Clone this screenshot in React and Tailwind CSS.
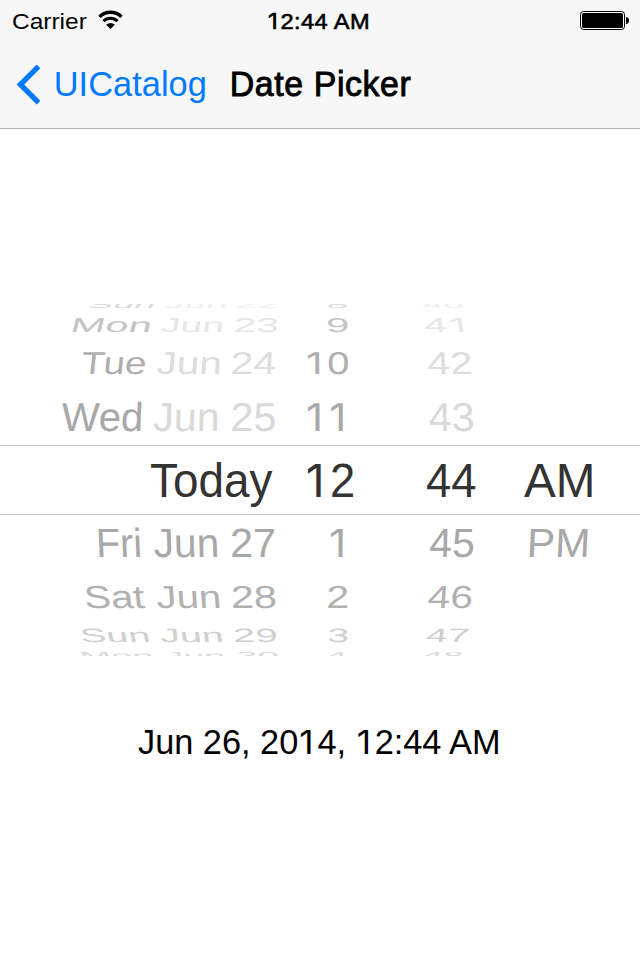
import React from "react";

const EM = 46;
const CAP = 0.688 * EM;
const BASE = EM / 2 + ((0.905 - 0.212) / 2) * EM;
const pen = document.createElement("canvas").getContext("2d");

// The figure one is set in Inter for its footless form, in a full figure-wide box.
const ONE = { size: 43.5, advance: 25.6, left: 3.4, width: 13 };

function measure(ch) {
  if (ch === "1") {
    return { width: ONE.advance, actualBoundingBoxLeft: -ONE.left, actualBoundingBoxRight: ONE.left + ONE.width };
  }
  pen.font = EM + 'px "Liberation Sans"';
  return pen.measureText(ch);
}

const split = (text) => text.split(/(1)/).filter(Boolean);

function inkOf(text, spacing) {
  let advance = 0;
  let left = 0;
  let right = 0;
  split(text).forEach((run, i) => {
    const m = measure(run);
    if (i === 0) left = -m.actualBoundingBoxLeft;
    const extra = run === "1" ? 0 : run.length * spacing;
    right = advance + m.actualBoundingBoxRight + Math.max(0, extra - spacing);
    advance += m.width + extra;
  });
  return { left, right };
}

function One() {
  pen.font = ONE.size + "px Inter";
  const m = pen.measureText("1");
  const inkLeft = -m.actualBoundingBoxLeft;
  const k = ONE.width / (m.actualBoundingBoxRight - inkLeft);
  return (
    <span className="inline-block align-baseline tracking-normal" style={{ width: ONE.advance }}>
      <span
        className="block w-max origin-left font-[Inter] text-[43.5px]"
        style={{ transform: `matrix(${k},0,0,1,${ONE.left - inkLeft * k},0)` }}
      >
        1
      </span>
    </span>
  );
}

// A word whose ink spans `width` and whose capitals stand `cap` high.
function Word({ text, width, gap = 0, cap, slope = 0, spacing = 0, className = "" }) {
  const { left, right } = inkOf(text, spacing);
  const sx = width / (right - left);
  const sy = cap / CAP;
  return (
    <div className="shrink-0" style={{ width, height: cap, marginLeft: gap }}>
      <span
        className={"flex w-max items-baseline whitespace-pre text-[46px] leading-[46px] " + className}
        style={{
          letterSpacing: spacing,
          transformOrigin: `0 ${BASE}px`,
          transform: `matrix(${sx},0,${-slope * sy},${sy},${-left * sx},${cap - BASE})`,
        }}
      >
        {split(text).map((run, i) => (run === "1" ? <One key={i} /> : <span key={i}>{run}</span>))}
      </span>
    </div>
  );
}

function Row({ words, cap, top, lean = 0, className = "" }) {
  let edge = 0;
  return (
    <div className={"flex " + className} style={{ height: cap, marginTop: top }}>
      {words.map(([text, x0, x1, color]) => {
        const gap = x0 - edge;
        edge = x1;
        return (
          <Word
            key={x0}
            text={text}
            width={x1 - x0}
            gap={gap}
            cap={cap}
            slope={lean * (320 - (x0 + x1) / 2)}
            className={color}
          />
        );
      })}
    </div>
  );
}

const above = [
  { cap: 7, top: -3, lean: 0.003, words: [
    ["Sun", 87.5, 151, "text-[#dadada]"], ["Jun", 164, 224, "text-[#efefef]"], ["22", 237, 277, "text-[#efefef]"],
    ["8", 328, 347.5, "text-[#dadada]"], ["40", 423.5, 463, "text-[#efefef]"]] },
  { cap: 13.7, top: 10.3, lean: 0.0012, words: [
    ["Mon", 72, 148, "text-[#c4c4c4]"], ["Jun", 160, 221, "text-[#e6e6e6]"], ["23", 234.7, 276.5, "text-[#e6e6e6]"],
    ["9", 327.7, 347.7, "text-[#c4c4c4]"], ["41", 426.5, 463.5, "text-[#e6e6e6]"]] },
  { cap: 21.7, top: 20.3, lean: 0.0005, words: [
    ["Tue", 80.5, 143.7, "text-[#afafaf]"], ["Jun", 156, 219, "text-[#dddddd]"], ["24", 232.3, 275.7, "text-[#dddddd]"],
    ["10", 308, 348.3, "text-[#afafaf]"], ["42", 428.7, 471.5, "text-[#dddddd]"]] },
  { cap: 27.8, top: 29.5, lean: 0.0002, words: [
    ["Wed", 60.8, 140.3, "text-[#a8a8a8]"], ["Jun", 153.3, 217.3, "text-[#d9d9d9]"], ["25", 231.7, 274.7, "text-[#d9d9d9]"],
    ["11", 308, 342.4, "text-[#a8a8a8]"], ["43", 430.3, 474, "text-[#d9d9d9]"]] },
];

const today = [
  ["Today", 151.3, 272.7, "text-[#333]"], ["12", 307.7, 353.3, "text-[#333]"],
  ["44", 427, 476, "text-[#333]"], ["AM", 524, 592, "text-[#333]"],
];

const below = [
  { cap: 28, top: 14, lean: -0.0002, words: [
    ["Fri", 99.3, 141, "text-[#a8a8a8]"], ["Jun", 154.3, 217.7, "text-[#a8a8a8]"], ["27", 231.7, 274.7, "text-[#a8a8a8]"],
    ["1", 330.7, 342.3, "text-[#a8a8a8]"], ["45", 430.3, 473.5, "text-[#a8a8a8]"], ["PM", 529, 586.5, "text-[#a8a8a8]"]] },
  { cap: 22, top: 29, lean: -0.0005, words: [
    ["Sat", 87, 145.7, "text-[#b1b1b1]"], ["Jun", 157, 219.7, "text-[#b1b1b1]"], ["28", 233.3, 276, "text-[#b1b1b1]"],
    ["2", 327.7, 347.3, "text-[#b1b1b1]"], ["46", 428.3, 471.3, "text-[#b1b1b1]"]] },
  { cap: 13.2, top: 20.7, lean: -0.001, words: [
    ["Sun", 83, 149.3, "text-[#cfcfcf]"], ["Jun", 161, 222.3, "text-[#cfcfcf]"], ["29", 235.3, 277, "text-[#cfcfcf]"],
    ["3", 327.7, 347.3, "text-[#cfcfcf]"], ["47", 425.7, 467, "text-[#cfcfcf]"]] },
  { cap: 7, top: 10.3, lean: -0.0025, words: [
    ["Mon", 84, 153, "text-[#dadada]"], ["Jun", 166, 224, "text-[#dadada]"], ["30", 238, 278, "text-[#dadada]"],
    ["4", 328, 346, "text-[#dadada]"], ["48", 422, 461, "text-[#dadada]"]] },
];

export default function App() {
  return (
    <div className="flex h-[960px] w-[640px] flex-col overflow-hidden bg-white font-['Liberation_Sans',Arial,sans-serif]">
      <header className="h-[129px] shrink-0 border-b border-[#b2b2b2] bg-[#f7f7f7] text-black">
        <div className="flex h-10 items-start">
          <div className="flex pt-[12.8px]">
            <Word text="Carrier" gap={12.8} width={73.7} cap={15.6} />
          </div>
          <svg className="ml-[11.5px] mt-[10px] h-5 w-[26px]" viewBox="0 0 26 20" fill="none" stroke="#000">
            <path d="M1.5 6.9A15.5 15.5 0 0 1 23.5 6.9" strokeWidth="3.4" />
            <path d="M5.4 11.1A10 10 0 0 1 19.6 11.1" strokeWidth="3" />
            <path d="M12.5 19L8.1 14.8Q12.5 11.4 16.9 14.8Z" fill="#000" stroke="none" />
          </svg>
          <div className="flex pt-[12.8px]">
            <Word text="12:44 AM" gap={145} width={100.2} cap={15.6} spacing={0.8} className="[-webkit-text-stroke:1.2px_black]" />
          </div>
          <svg className="ml-[209.8px] mt-[10px] h-[21px] w-[51px]" viewBox="0 0 51 21">
            <rect x="1.5" y="1.5" width="44" height="18" rx="3" fill="#fff" stroke="#000" />
            <rect x="3" y="3" width="41" height="15" rx="1.5" />
            <path d="M47 7Q50 7.2 50 10.5T47 14Z" />
          </svg>
        </div>
        <div className="flex h-[88px] items-start">
          <svg className="ml-4 mt-6 h-[41px] w-[25px]" viewBox="0 0 25 41" fill="#007aff">
            <path d="M20.7 0.6L24.4 4.3L8.2 20.5L24.4 36.7L20.7 40.4L0.6 20.5Z" />
          </svg>
          <div className="flex pt-8 text-[#007aff]">
            <Word text="UICatalog" gap={15.2} width={148.9} cap={23.8} />
          </div>
          <div className="flex pt-8">
            <Word text="Date Picker" gap={27.2} width={178.6} cap={23.8} spacing={0.8} className="[-webkit-text-stroke:1.2px_black]" />
          </div>
        </div>
      </header>

      <section className="mt-[175px] flex h-[352px] shrink-0 flex-col overflow-hidden">
        {above.map((row, i) => (
          <Row key={i} {...row} className="shrink-0" />
        ))}
        <div className="mt-[13.7px] flex h-[70px] shrink-0 flex-col border-y border-[#c8c8c8]">
          <Row words={today} cap={33} top={18} />
        </div>
        {below.map((row, i) => (
          <Row key={i} {...row} className="shrink-0" />
        ))}
      </section>

      <div className="mt-[74.4px] flex">
        <Word text="Jun 26, 2014, 12:44 AM" gap={137.5} width={362} cap={23.8} />
      </div>
    </div>
  );
}
